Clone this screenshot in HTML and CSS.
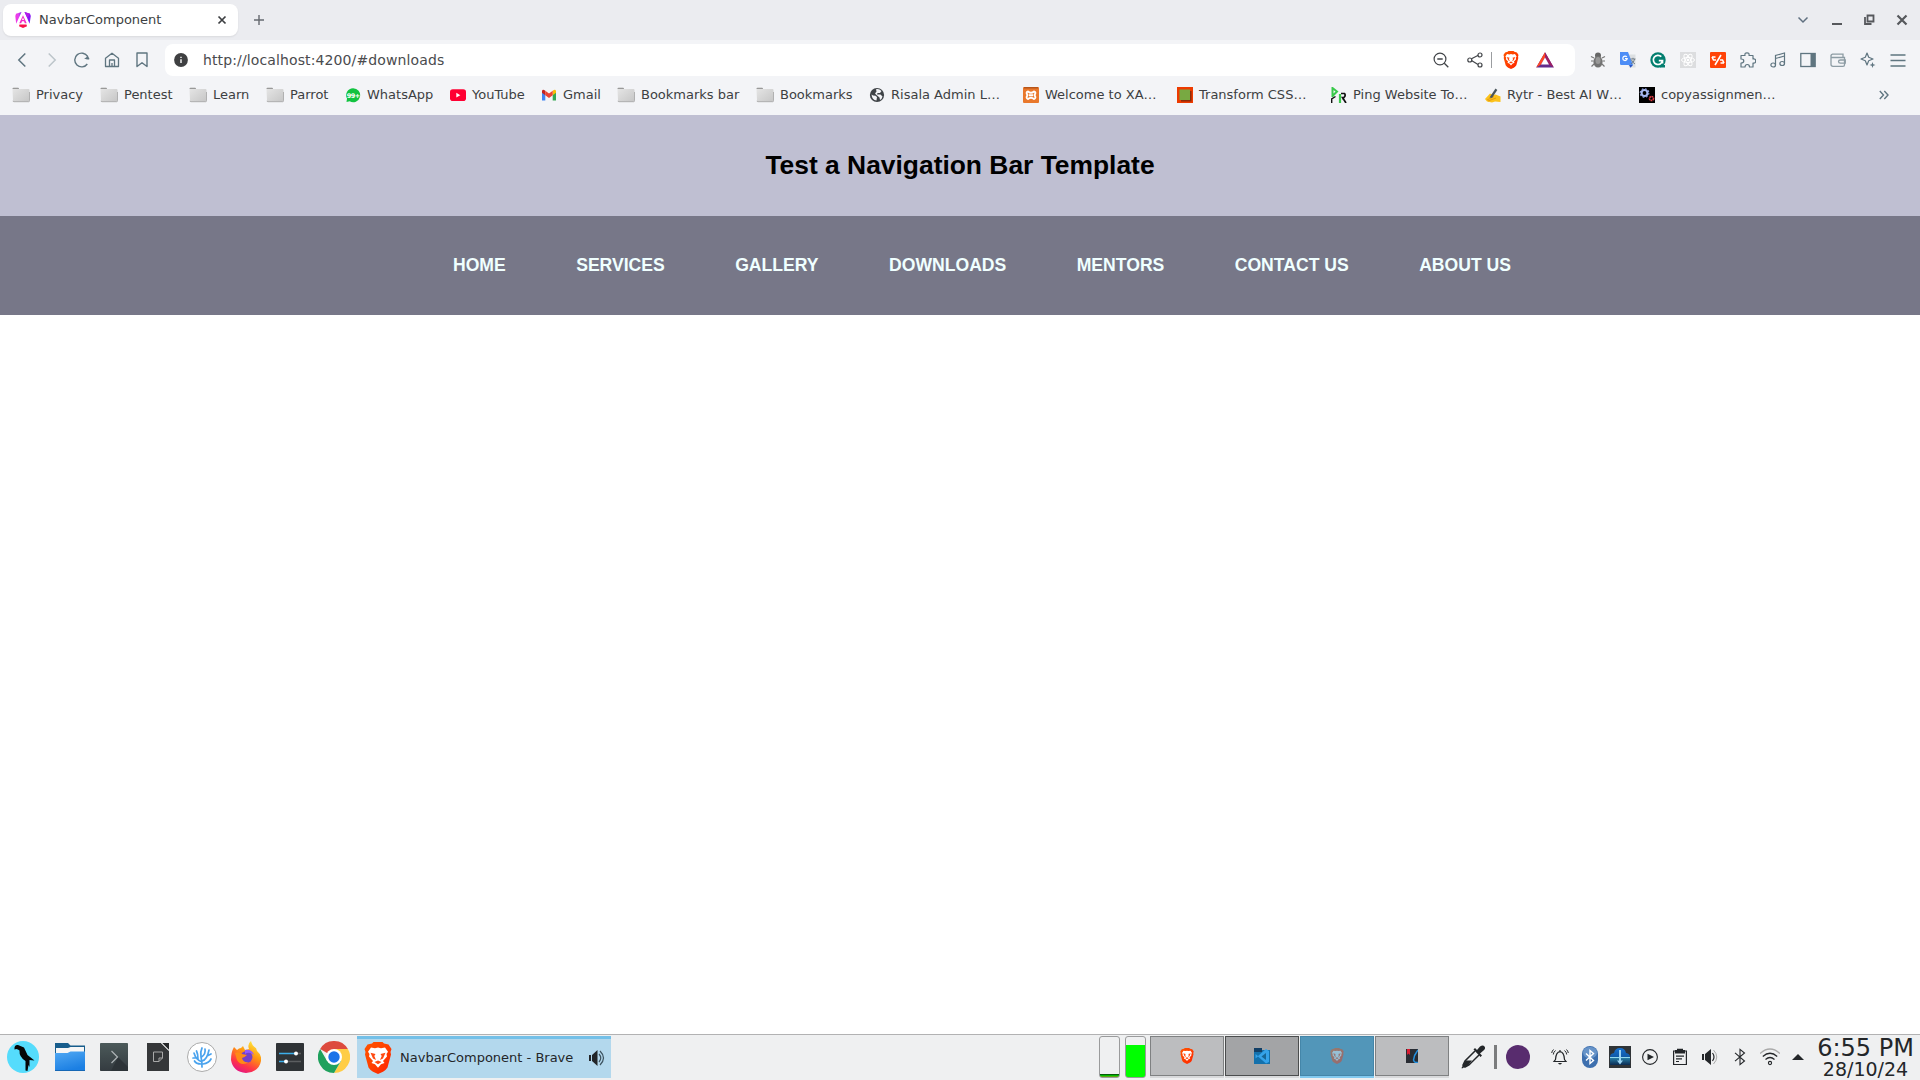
FILE: index.html
```html
<!DOCTYPE html>
<html lang="en">
<head>
<meta charset="utf-8">
<title>NavbarComponent</title>
<link rel="stylesheet" href="styles.css">
</head>
<body>
<svg class="defs" width="0" height="0" aria-hidden="true">
  <defs>
    <linearGradient id="g-folder" x1="0" y1="0" x2="1" y2="1"><stop offset="0" stop-color="#e6e6e6"/><stop offset="1" stop-color="#c6c6c6"/></linearGradient>
    <linearGradient id="g-brave" x1="0" y1="0" x2="1" y2="1"><stop offset="0" stop-color="#ff5500"/><stop offset="0.5" stop-color="#ff4000"/><stop offset="1" stop-color="#ff2000"/></linearGradient>
    <linearGradient id="g-ang" x1="0" y1="0" x2="1" y2="0"><stop offset="0" stop-color="#f637e3"/><stop offset="0.55" stop-color="#e040f0"/><stop offset="1" stop-color="#6a11f5"/></linearGradient>
    <linearGradient id="g-blue" x1="0" y1="0" x2="0.4" y2="1"><stop offset="0" stop-color="#52a9f3"/><stop offset="1" stop-color="#1b7fe3"/></linearGradient>
    <linearGradient id="g-term" x1="0" y1="0" x2="0" y2="1"><stop offset="0" stop-color="#4c5a5a"/><stop offset="1" stop-color="#343b40"/></linearGradient>
    <linearGradient id="g-fox" x1="0.8" y1="0" x2="0.3" y2="1"><stop offset="0" stop-color="#fff044"/><stop offset="0.4" stop-color="#ff980e"/><stop offset="0.75" stop-color="#ff3647"/><stop offset="1" stop-color="#e31587"/></linearGradient>
    <linearGradient id="g-dl" x1="0" y1="0" x2="0" y2="1"><stop offset="0" stop-color="#1670d0"/><stop offset="0.5" stop-color="#0f5aa8"/><stop offset="0.52" stop-color="#2b8cb4"/><stop offset="1" stop-color="#0b2b52"/></linearGradient>
    <symbol id="folder" viewBox="0 0 18 16"><path d="M0.5 2.5V1.5Q.5.8 1.3.8H6Q7 .8 7 2H16.5Q17.5 2 17.5 3V13.5Q17.5 14.5 16.5 14.5H2Q1 14.5 1 13.5Z" fill="url(#g-folder)"/><path d="M.5 2Q.5.8 1.5.8H6Q7 .8 7 2Z" fill="#999"/><path d="M1 13.8Q1 14.7 2 14.7H16.6Q17.6 14.7 17.6 13.5V5" fill="none" stroke="#a5a5a5" stroke-width=".9"/></symbol>
    <symbol id="lion" viewBox="0 0 28 32"><path d="M8 1.5L9.5 0H18.5L20 1.5L24.5 2.5L27.5 7L26.5 10L27 12.5L23.5 25.5Q22 28 19 29.7L14 32L9 29.7Q6 28 4.5 25.5L1 12.5L1.5 10L.5 7L3.5 2.5Z" fill="url(#g-brave)"/><path d="M14 5.5L17 6.2L21 5.5L24 9.8L22.5 12L23 14.5L19 19L20.5 21L17 22.3L14 25.8L11 22.3L7.500 21L9 19L5 14.500L5.500 12L4 9.800L7 5.500L11 6.200Z" fill="#fff"/><path d="M6.500 10.700L11.500 12L10.300 14L12 18L9 16.500ZM21.500 10.700L16.500 12L17.700 14L16 18L19 16.500ZM10.500 20L14 18.500L17.500 20L14 22.300Z" fill="#ff4a12"/></symbol>
  </defs>
</svg>

<div class="browser">
  <div class="tabstrip">
    <div class="tab">
      <svg width="16" height="16" viewBox="0 0 16 16"><path d="M6.500 0L1 1.700 .3 4 1.200 11.800Z" fill="url(#g-ang)"/><path d="M9.500 0L15 1.700 15.800 4 14.600 11.800Z" fill="#8514f5"/><path d="M9.500 0L15 1.700 12.500 6Z" fill="#b31ae8"/><path d="M8 3.200L4.300 11.300H6.200L7 9.300H9L9.800 11.300H11.700ZM8 5.600L9 8H7Z" fill="#f42ac9" fill-rule="evenodd"/><path d="M4.500 12.500H11.500L12 14.200 8 16 4 14.200Z" fill="#f8104c"/></svg>
      <span class="tab-title">NavbarComponent</span>
      <svg width="10" height="10" viewBox="0 0 10 10"><path d="M1.500 1.500L8.500 8.500M8.500 1.500L1.500 8.500" stroke="#3d3f42" stroke-width="1.700"/></svg>
    </div>
    <svg class="newtab" width="12" height="12" viewBox="0 0 12 12"><path d="M6 1V11M1 6H11" stroke="#666a70" stroke-width="1.400"/></svg>
    <div class="window-buttons">
      <svg width="12" height="12" viewBox="0 0 12 12"><path d="M1.500 3.500L6 8L10.500 3.500" fill="none" stroke="#607080" stroke-width="1.500"/></svg>
      <svg width="12" height="12" viewBox="0 0 12 12"><path d="M2 10H12" stroke="#56585c" stroke-width="2"/></svg>
      <svg width="12" height="12" viewBox="0 0 12 12"><path d="M4.500 1.500H10.500V7.500H4.500ZM2 3V10H8.500" fill="none" stroke="#56585c" stroke-width="1.800"/></svg>
      <svg width="12" height="12" viewBox="0 0 12 12"><path d="M1.500 1.500L10.500 10.500M10.500 1.500L1.500 10.500" stroke="#56585c" stroke-width="2.200"/></svg>
    </div>
  </div>

  <div class="toolbar">
    <div class="nav-buttons">
      <svg width="16" height="16" viewBox="0 0 16 16"><path d="M11.300 1.500L4.800 8L11.300 14.500" fill="none" stroke="#5f7580" stroke-width="1.500"/></svg>
      <svg width="16" height="16" viewBox="0 0 16 16"><path d="M4.700 1.500L11.200 8L4.700 14.500" fill="none" stroke="#bcc5ca" stroke-width="1.500"/></svg>
      <svg width="16" height="16" viewBox="0 0 16 16"><path d="M13.300 12A6.900 6.900 0 1 1 13.600 4.500" fill="none" stroke="#5f7580" stroke-width="1.400"/><path d="M10 6.200Q13 6 13.500 3L15.500 7Q14 8.500 10 6.200Z" fill="#5f7580"/></svg>
      <svg width="16" height="16" viewBox="0 0 16 16"><path d="M1.500 6.300L8 1.200L14.500 6.300V14.500H1.500ZM5.500 14.500V8H10.500V14.500M8 14.500V11" fill="none" stroke="#5f7580" stroke-width="1.300" stroke-linejoin="round"/></svg>
      <svg width="16" height="16" viewBox="0 0 16 16"><path d="M3 1H13V14.500L8 10.700L3 14.500Z" fill="none" stroke="#5f7580" stroke-width="1.400" stroke-linejoin="round"/></svg>
    </div>
    <div class="urlbar">
      <svg width="14" height="14" viewBox="0 0 14 14"><circle cx="7" cy="7" r="6.900" fill="#3f4042"/><path d="M7 6.300V10M7 3.700V5" stroke="#fff" stroke-width="1.400"/></svg>
      <span class="url">http://localhost:4200/#downloads</span>
      <svg class="zoom" width="16" height="16" viewBox="0 0 16 16"><circle cx="7" cy="7" r="5.900" fill="none" stroke="#424549" stroke-width="1.200"/><path d="M11.300 11.300L15.300 15.300M4.300 7H9.700" stroke="#424549" stroke-width="1.300"/></svg>
      <svg class="share" width="16" height="16" viewBox="0 0 16 16"><path d="M4 7L11.300 3.300M4.500 8.500L11 12.500" stroke="#424549" stroke-width="1.200"/><g fill="#fff" stroke="#424549" stroke-width="1.200"><circle cx="2.800" cy="8" r="2"/><circle cx="13" cy="3" r="2"/><circle cx="13" cy="13" r="2"/></g></svg>
      <span class="url-sep"></span>
      <svg class="shield" width="16" height="18" viewBox="0 0 28 32"><use href="#lion"/></svg>
      <svg class="bat" width="18" height="16" viewBox="0 0 18 16"><path d="M9 .2L.2 15.500H17.800Z" fill="#642c8c"/><path d="M9 .2L.2 15.500L5 12.500L9 5.500Z" fill="#ff4724"/><path d="M9 .2L17.800 15.500L13 12.500L9 5.500Z" fill="#9e1f63"/><path d="M9 5.500L5 12.500H13Z" fill="#fff"/></svg>
    </div>
    <div class="extensions">
      <svg width="16" height="16" viewBox="0 0 16 16"><path d="M4 6L1 4.500M3.500 9H1M4 12L1.500 14.500M12 6L15 4.500M12.500 9H15M12 12L14.500 14.500" stroke="#777" stroke-width="1.200"/><circle cx="8" cy="3.500" r="3" fill="#666"/><ellipse cx="8" cy="9.800" rx="4.600" ry="5.800" fill="#737373"/><ellipse cx="8" cy="8.500" rx="2.500" ry="3.500" fill="#989898"/></svg>
      <svg width="16" height="16" viewBox="0 0 16 16"><path d="M6 2.500H15.500V15.500H9Z" fill="#dcdfe2"/><path d="M9 13H13L10.500 15.800Z" fill="#2a56c6"/><path d="M0 0H8L13 13H1.300Q0 13 0 11.700Z" fill="#4d8df6"/><path d="M6.800 5A2.200 2.200 0 1 0 7.200 6.700H5" fill="none" stroke="#fff" stroke-width="1.200"/><path d="M10.500 7H15.500M13 5.800V7M14.600 7Q14 10.500 11 12M11.500 8Q12.500 10.500 15 12" fill="none" stroke="#6b7780" stroke-width=".9"/></svg>
      <svg width="16" height="16" viewBox="0 0 16 16"><circle cx="8" cy="8" r="7.700" fill="#027e6f"/><path d="M10 13H15V15.500H10Z" fill="#027e6f"/><path d="M11.300 4.700A4.600 4.600 0 1 0 12.500 8.700H8.800M12.500 8.700V11.500" fill="none" stroke="#fff" stroke-width="1.700"/></svg>
      <svg width="16" height="16" viewBox="0 0 16 16"><rect width="16" height="16" fill="#dcdddf"/><g fill="none" stroke="#fff" stroke-width="1"><ellipse cx="8" cy="8" rx="6.500" ry="2.500"/><ellipse cx="8" cy="8" rx="6.500" ry="2.500" transform="rotate(60 8 8)"/><ellipse cx="8" cy="8" rx="6.500" ry="2.500" transform="rotate(120 8 8)"/></g><circle cx="8" cy="8" r="1.300" fill="#fff"/></svg>
      <svg width="16" height="16" viewBox="0 0 16 16"><rect width="16" height="16" rx="1" fill="#ff4308"/><path d="M11 3L5 13M2 5H5.500M2 5L3.500 8H6M14 11H10.500M14 11L12.500 8H10" fill="none" stroke="#fff" stroke-width="1.600"/></svg>
      <svg width="16" height="16" viewBox="0 0 16 16"><path d="M1 3.500H5Q4.500 .8 7 .8T9 3.500H13V7Q15.700 6.500 15.700 9T13 11V15H9.500Q9.500 12.500 7.300 12.500T5 15H1V11Q3.800 11 3.800 9T1 7Z" fill="none" stroke="#5f7580" stroke-width="1.200" stroke-linejoin="round"/></svg>
      <svg width="16" height="16" viewBox="0 0 16 16"><path d="M5.500 13V3.500L14.500 1V11.500M5.500 6.500L14.500 4" fill="none" stroke="#5f7580" stroke-width="1.200"/><ellipse cx="3.200" cy="13" rx="2.300" ry="2" fill="none" stroke="#5f7580" stroke-width="1.200"/><ellipse cx="12.200" cy="11.500" rx="2.300" ry="2" fill="none" stroke="#5f7580" stroke-width="1.200"/></svg>
      <svg width="16" height="16" viewBox="0 0 16 16"><rect x=".8" y="1.500" width="14.400" height="13" fill="none" stroke="#5f7580" stroke-width="1.300"/><path d="M10.500 1.500H15V14.500H10.500Z" fill="#5f7580"/></svg>
      <svg width="16" height="16" viewBox="0 0 16 16"><path d="M1 3V12.500Q1 14.300 3 14.300H13Q14.500 14.300 14.500 13V5.500H2.500Q1 5.500 1 4T2.500 2.200H13V5.500M15.300 8H10.500Q8.500 8 8.500 9.500T10.500 11.200H15.300Z" fill="none" stroke="#8d9ca4" stroke-width="1.300"/></svg>
      <svg width="16" height="16" viewBox="0 0 16 16"><path d="M7 1L8.700 5.300 13 7 8.700 8.700 7 13 5.300 8.700 1 7 5.300 5.300Z" fill="none" stroke="#5f7580" stroke-width="1.200" stroke-linejoin="round"/><path d="M12.500 10L13.300 12.200 15.500 13 13.300 13.800 12.500 16 11.700 13.800 9.500 13 11.700 12.200Z" fill="#5f7580"/></svg>
      <svg width="16" height="16" viewBox="0 0 16 16"><path d="M.5 3H15.500M.5 8.500H15.500M.5 14H15.500" stroke="#5f7580" stroke-width="1.300"/></svg>
    </div>
  </div>

  <div class="bookmarks">
    <div class="bm"><svg width="18" height="16"><use href="#folder"/></svg><span>Privacy</span></div>
    <div class="bm"><svg width="18" height="16"><use href="#folder"/></svg><span>Pentest</span></div>
    <div class="bm"><svg width="18" height="16"><use href="#folder"/></svg><span>Learn</span></div>
    <div class="bm"><svg width="18" height="16"><use href="#folder"/></svg><span>Parrot</span></div>
    <div class="bm"><svg width="16" height="16" viewBox="0 0 16 16"><path d="M8 1.200A7 7 0 1 1 4.700 14.300L1.500 15L2 11.600A7 7 0 0 1 8 1.200Z" fill="#12c340"/><text x="8.200" y="10.800" class="badge-text">99+</text></svg><span>WhatsApp</span></div>
    <div class="bm"><svg width="16" height="16" viewBox="0 0 16 16"><rect y="2.300" width="16" height="11.700" rx="2.800" fill="#ff0033"/><path d="M6.300 5.800V10.500L10.300 8.150Z" fill="#fff"/></svg><span>YouTube</span></div>
    <div class="bm"><svg width="16" height="16" viewBox="0 0 16 16"><path d="M1 4V13.500H4.300V6.500Z" fill="#4285f4"/><path d="M11.700 6.500V13.500H15V4Z" fill="#34a853"/><path d="M11.700 3.700V8.200L15 5.700V4Q14.500 1.500 11.700 3.700Z" fill="#fbbc04"/><path d="M4.300 3.700V8.200L1 5.700V4Q1.500 1.500 4.300 3.700Z" fill="#c5221f"/><path d="M4.300 3.700L8 6.500L11.700 3.700V8.200L8 11L4.300 8.200Z" fill="#ea4335"/></svg><span>Gmail</span></div>
    <div class="bm"><svg width="18" height="16"><use href="#folder"/></svg><span>Bookmarks bar</span></div>
    <div class="bm"><svg width="18" height="16"><use href="#folder"/></svg><span>Bookmarks</span></div>
    <div class="bm"><svg width="16" height="16" viewBox="0 0 16 16"><circle cx="8" cy="8" r="7.100" fill="#3f4347"/><path d="M2.500 7.500Q4 9 6 8.500L8 10L7.500 13.500Q3 13 2.500 7.500ZM7 2.300Q10 1.500 12.500 4L11 6H8.500L8 7.500H11.500L13.500 9.500Q13 12 11 13L10.500 10.500L7.500 8L6 6.500L7.500 4.500Z" fill="#f3f4f7"/></svg><span>Risala Admin L…</span></div>
    <div class="bm"><svg width="16" height="16" viewBox="0 0 16 16"><rect width="16" height="16" rx="1" fill="#e9782c"/><path d="M1 0H15V1.500H1Z" fill="#b75519"/><path d="M5 4.500Q8 7 11 4.500Q13.500 5 11.500 8Q13.500 11.500 11 12Q8 9.500 5 12Q2.500 11.500 4.500 8Q2.500 5 5 4.500ZM6 8.200H10" fill="none" stroke="#fff" stroke-width="1.900"/></svg><span>Welcome to XA…</span></div>
    <div class="bm"><svg width="16" height="16" viewBox="0 0 16 16"><rect width="16" height="16" fill="#ed3b00"/><path d="M4 4H14.500V14.500H4Z" fill="#8d2b08"/><rect x="2.500" y="2.500" width="10.500" height="10.500" fill="#78a942"/></svg><span>Transform CSS…</span></div>
    <div class="bm"><svg width="16" height="16" viewBox="0 0 16 16"><path d="M1.500 10V1L6 4.500L1.500 9" fill="none" stroke="#3ac94c" stroke-width="2"/><path d="M.7 16V12L4.500 9.500" fill="none" stroke="#111" stroke-width="1.400"/><path d="M9 16V7" stroke="#3ac94c" stroke-width="2.200"/><path d="M10 6.500H13.500Q15 8.500 13 10.500H11.500L15 16M12 10V12.500" fill="none" stroke="#111" stroke-width="1.700"/></svg><span>Ping Website To…</span></div>
    <div class="bm"><svg width="16" height="16" viewBox="0 0 16 16"><path d="M0 12L5 6.500L8 8L10.500 7.500L15.500 9.500V15L10 14.500L7 15.500L2 14.500Z" fill="#fcc21b"/><path d="M2 13L9 9.500M3 14L11 11" stroke="#e39a12" stroke-width="1"/><path d="M4.500 10.500L10.500 1.500L12.300 3L7 11Z" fill="#4a555c"/></svg><span>Rytr - Best AI W…</span></div>
    <div class="bm"><svg width="16" height="16" viewBox="0 0 16 16"><rect width="16" height="16" fill="#000"/><circle cx="5.500" cy="6" r="2.900" fill="none" stroke="#a9b9f0" stroke-width="2"/><circle cx="5.500" cy="6" r="4.300" fill="none" stroke="#91a3e5" stroke-width="1.200" stroke-dasharray="1.700 1.675"/><circle cx="12.500" cy="11.500" r="2" fill="none" stroke="#e33d45" stroke-width="1.700" stroke-dasharray="1.600 .5"/></svg><span>copyassignmen…</span></div>
    <div class="bm more"><svg width="10" height="16" viewBox="0 0 10 16"><path d="M.8 4L4.500 8L.8 12M5.300 4L9 8L5.300 12" fill="none" stroke="#5f7580" stroke-width="1.400"/></svg></div>
  </div>
</div>

<main class="page">
  <header class="hero"><h1>Test a Navigation Bar Template</h1></header>
  <nav class="site-nav">
    <ul>
      <li><a>HOME</a></li><li><a>SERVICES</a></li><li><a>GALLERY</a></li><li><a>DOWNLOADS</a></li><li><a>MENTORS</a></li><li><a>CONTACT US</a></li><li><a>ABOUT US</a></li>
    </ul>
  </nav>
</main>

<footer class="taskbar">
  <div class="launchers">
    <svg width="32" height="32" viewBox="0 0 32 32"><circle cx="16" cy="16" r="16" fill="#55dcfc"/><path d="M7.500 8.500Q7 3.500 11 4L17 6.500L20.500 14L27.500 19.500L22.500 19V26L21.500 24L20.500 30L18.500 29.500V20Q12 16 12.500 9.500Q10 7 7.500 8.500Z" fill="#050505"/></svg>
    <svg width="30" height="30" viewBox="0 0 30 30"><path d="M0 1H13L15.500 3.500H30V14H0Z" fill="#175d8c"/><path d="M1 6H13L15.500 5H29V13H1Z" fill="#f6f6f6"/><path d="M0 11H12.500L15.500 9.500H30V29H0Z" fill="url(#g-blue)"/><path d="M0 28.500H30" stroke="#1667b5"/></svg>
    <svg width="28" height="28" viewBox="0 0 28 28"><rect width="28" height="28" rx=".8" fill="url(#g-term)"/><path d="M18 14L28 24V28H11Z" fill="#2d3438"/><path d="M11.500 8L17.500 14L11.500 20" fill="none" stroke="#aeb4b6" stroke-width="1.200"/></svg>
    <svg width="22" height="28" viewBox="0 0 22 28"><path d="M0 0H14L22 8V28H0Z" fill="#353739"/><path d="M15 0H22V7Z" fill="#252729"/><path d="M14.500 0L22 7.500" stroke="#eee"/><path d="M6.500 9H15.500V15L12 18.500H6.500ZM12 18.500V15H15.500" fill="none" stroke="#a8a8a8"/></svg>
    <svg width="30" height="30" viewBox="0 0 30 30"><circle cx="15" cy="15" r="14.500" fill="#fff" stroke="#aaa"/><path d="M15 25Q15 19 14 15Q13 10 15 6M15 20Q9 18 7 11M15 19Q20 18 22 8M10 16L6 16M11 17Q11 12 9.500 9M20 14L24 12M14.500 15Q19 12 18 7M16 22Q22 21 24 17M14 22Q9 22 7.500 19" fill="none" stroke="#4aa3ee" stroke-width="1.700" stroke-linecap="round"/></svg>
    <svg width="30" height="32" viewBox="0 0 30 32"><path d="M3 6L6 9Q8 7 10 7L12 5L14 9L18 8Q16 3 20 0Q21 5 25 7L26 10Q31 14 30 20Q28 31 15 32Q2 31 0 19Q0 11 3 6Z" fill="url(#g-fox)"/><circle cx="15.500" cy="16" r="6" fill="#7540c8"/><path d="M4 12Q8 10 11 13L16 14Q13 17 11 17Q12 22 18 21Q10 26 6 19Z" fill="#ff8a16"/><path d="M14 9Q21 8 23 14Q18 10 14 13Z" fill="#9059ff"/></svg>
    <svg width="28" height="28" viewBox="0 0 28 28"><rect width="28" height="28" rx=".8" fill="#2f3336"/><path d="M3 10.500H20M3 18.500H10" stroke="#3daee9" stroke-width="1.600"/><path d="M20 10.500H25M10 18.500H25" stroke="#5b5e60" stroke-width="1.600"/><circle cx="20" cy="10.500" r="2" fill="#fff"/><circle cx="10" cy="18.500" r="2" fill="#fff"/></svg>
    <svg width="32" height="32" viewBox="0 0 32 32"><path d="M16 16L2.140 8A16 16 0 0 1 29.860 8Z" fill="#dd4b3e"/><path d="M16 8H29.860A16 16 0 0 1 16 32L23 20Z" fill="#ffcd46"/><path d="M9.070 20L2.140 8A16 16 0 0 0 16 32L22.930 20Z" fill="#1fa15d"/><circle cx="16" cy="16" r="8" fill="#fff"/><circle cx="16" cy="16" r="5.700" fill="#1a73e8"/></svg>
  </div>
  <div class="task">
    <svg width="28" height="32"><use href="#lion"/></svg>
    <span>NavbarComponent - Brave</span>
    <svg width="18" height="18" viewBox="0 0 18 18"><path d="M1 6H3V12H1ZM4 6L9.500 1V17L4 12Z" fill="#232629"/><path d="M11 5Q14.500 9 11 13M12 2Q19 9 12 16" fill="none" stroke="#3d5360" stroke-width="1.200"/></svg>
  </div>
  <div class="gauges"><div class="gauge low"></div><div class="gauge high"></div></div>
  <div class="pager">
    <div class="desk"><svg width="14" height="16" viewBox="0 0 28 32"><use href="#lion"/></svg></div>
    <div class="desk dark"><svg width="16" height="16" viewBox="0 0 16 16"><path d="M0 0H8V2H16V16H0Z" fill="#1471ac"/><path d="M0 0H8V4H0Z" fill="#123f66"/><path d="M12 1L15 3V14L12 15.500L4 8.500L1.500 10.500V6L4 8Z" fill="#35a2e9"/><path d="M12 5V12L7.500 8.500Z" fill="#176697"/></svg></div>
    <div class="desk active"><svg width="14" height="16" viewBox="0 0 28 32"><use href="#lion"/></svg></div>
    <div class="desk"><svg width="12" height="14" viewBox="0 0 12 14"><rect width="12" height="14" fill="#282c33"/><path d="M1 0H4V6L2.500 4.500L1 6Z" fill="#d91c32"/><path d="M12 1Q8 6 7.500 11Q8 14 12 13.500" fill="none" stroke="#2391df" stroke-width="1.500"/></svg></div>
  </div>
  <div class="picker">
    <svg width="24" height="24" viewBox="0 0 24 24"><path d="M14 6L4 16L2 20L4 22L8 20L18 10" fill="none" stroke="#232629" stroke-width="1.500"/><path d="M4.500 15.500H11L7.500 20L1 23.500L.5 23Z" fill="#232629"/><path d="M12.500 4.500L14 3L16 5L19 1.500Q22-.5 23.500 1.500T22.500 5.500L19 8.500L21 10.500L19.500 12Z" fill="#232629"/></svg>
    <span class="picker-sep"></span><span class="picker-color"></span>
  </div>
  <div class="tray">
    <svg width="18" height="18" viewBox="0 0 18 18"><path d="M3 13.500H15L13.500 11.500Q13 4 9 3.700Q5 4 4.500 11.500ZM9 3.700V2" fill="none" stroke="#232629" stroke-width="1.200"/><path d="M7 15H11Q9 18 7 15Z" fill="#232629"/><path d="M4.500 2.500Q2.500 4 2.300 6.500M2.500 1.500Q1 3 .7 5M13.500 2.500Q15.500 4 15.700 6.500M15.500 1.500Q17 3 17.300 5" fill="none" stroke="#232629"/></svg>
    <svg width="16" height="22" viewBox="0 0 16 22"><rect width="16" height="22" rx="8" fill="#3d6fae"/><rect x="1" y="1" width="14" height="11" rx="6" fill="#6794c9"/><path d="M4 7.500L11.500 14.500L8 17.500V4.500L11.500 7.500L4 14.500" fill="none" stroke="#fff" stroke-width="1.400"/></svg>
    <svg width="22" height="22" viewBox="0 0 22 22"><rect width="22" height="22" fill="#303437"/><path d="M1 11Q1 7.500 5 7Q6 2 11 2Q16 2 17 7Q21 7.500 21 11V19H1Z" fill="url(#g-dl)"/><path d="M1 11.500H21" stroke="#92d9ee" stroke-width="1"/><path d="M10 4H12V14.500H14L11 18.500L8 14.500H10Z" fill="#9bd5f4"/></svg>
    <svg width="16" height="16" viewBox="0 0 16 16"><circle cx="8" cy="8" r="7.400" fill="none" stroke="#232629" stroke-width="1.100"/><path d="M5.500 4.700L12 8L5.500 11.300Z" fill="#232629"/></svg>
    <svg width="16" height="18" viewBox="0 0 16 18"><path d="M1.600 3H14.400V16.500H1.600Z" fill="none" stroke="#232629" stroke-width="1.200"/><path d="M3 5.500V2H5V.8H11V2H13V5.500ZM4 7.500H12V8.700H4ZM4 10.200H10V11.400H4ZM4 12.900H7V14H4Z" fill="#232629"/></svg>
    <svg width="18" height="18" viewBox="0 0 18 18"><path d="M1 6H3V12H1ZM4 6L10 1V17L4 12Z" fill="#232629"/><path d="M11.500 5Q14.500 9 11.500 13" fill="none" stroke="#232629" stroke-width="1.200"/><path d="M12.500 2Q19 9 12.500 16" fill="none" stroke="#aaa" stroke-width="1"/></svg>
    <svg width="12" height="18" viewBox="0 0 12 18"><path d="M1 4.800L10.500 13L6 16.700V1.300L10.500 5L1 13.200" fill="none" stroke="#232629" stroke-width="1.100"/></svg>
    <svg width="20" height="18" viewBox="0 0 20 18"><path d="M0 5.500Q10-3.500 20 5.500" fill="none" stroke="#aaa" stroke-width="1.200"/><path d="M2.800 8.500Q10 2 17.200 8.500M5.500 11.500Q10 7.500 14.500 11.500" fill="none" stroke="#232629" stroke-width="1.200"/><circle cx="10" cy="15" r="1.600" fill="none" stroke="#232629" stroke-width="1.100"/></svg>
    <svg width="12" height="6" viewBox="0 0 12 6"><path d="M0 6L6 0L12 6Z" fill="#232629"/></svg>
  </div>
  <div class="clock"><span class="time">6:55 PM</span><span class="date">28/10/24</span></div>
</footer>
</body>
</html>
```
FILE: styles.css
```css
* { box-sizing: border-box; }
body {
  margin: 0;
  width: 1920px;
  height: 1080px;
  overflow: hidden;
  display: flex;
  flex-direction: column;
  background: #fff;
  color: #3d3f42;
  font: 13px/16px "DejaVu Sans", sans-serif;
}
svg { display: block; flex: none; }

.browser { height: 115px; flex: none; background: #f3f4f7; }
.tabstrip { height: 40px; display: flex; align-items: center; background: #ebecf0; padding-left: 3px; }
.tab {
  width: 235px;
  height: 32px;
  display: flex;
  align-items: center;
  padding: 0 11px 0 12px;
  background: #fff;
  border-radius: 8px;
  box-shadow: 0 1px 2px rgba(0, 0, 0, .08);
}
.tab-title { flex: 1; margin-left: 8px; font-size: 13px; }
.newtab { margin-left: 15px; }
.window-buttons { margin-left: auto; display: flex; gap: 21px; padding-right: 12px; }

.toolbar { height: 40px; display: flex; align-items: center; }
.nav-buttons { display: flex; gap: 14px; margin-left: 14px; width: 151px; }
.urlbar {
  width: 1410px;
  height: 32px;
  display: flex;
  align-items: center;
  padding: 0 21px 0 9px;
  background: #fff;
  border-radius: 8px;
}
.url { flex: 1; margin-left: 15px; font-size: 14px; letter-spacing: .12px; color: #4a4b4e; }
.share { margin-left: 18px; }
.url-sep { width: 1px; height: 16px; margin: 0 11px 0 8px; background: #9b9da0; }
.bat { margin-left: 17px; }
.extensions { display: flex; gap: 14px; margin-left: 15px; }

.bookmarks {
  height: 35px;
  padding: 1px 0 6px 12px;
  display: grid;
  grid-template-columns: 88px 89px 77px 79px 105px 91px 76px 139px 113px 154px 154px 154px 154px 154px 240px auto;
  align-items: center;
}
.bm { display: flex; align-items: center; gap: 6px; white-space: nowrap; }
.badge-text { font: bold 6.500px "DejaVu Sans", sans-serif; letter-spacing: -.5px; fill: #fff; text-anchor: middle; }

.page { flex: 1; font-family: "Liberation Sans", Arial, sans-serif; }
.hero { height: 101px; display: flex; align-items: center; justify-content: center; padding-bottom: 2px; background: #bfbfd2; }
.hero h1 { margin: 0; font-size: 26.400px; line-height: 30px; color: #000; }
.site-nav { height: 99px; background: #777788; }
.site-nav ul {
  height: 100%;
  margin: 0;
  padding: 0 0 2px 44px;
  display: flex;
  align-items: center;
  justify-content: center;
  gap: 70.400px;
  list-style: none;
}
.site-nav a { font-size: 17.600px; line-height: 20px; font-weight: bold; color: azure; }

.taskbar { height: 46px; flex: none; display: flex; align-items: flex-start; padding-top: 1px; border-top: 1px solid #b2b2b3; background: #eff0f1; color: #232629; }
.taskbar > * { flex: none; }
.launchers { width: 357px; height: 42px; display: grid; grid-template-columns: 48px repeat(7, 44px); align-items: center; justify-items: center; }
.launchers svg:first-child { margin-right: 2px; }
.task {
  width: 254px;
  height: 42px;
  display: flex;
  align-items: center;
  padding: 0 5px 2px 7px;
  border-top: 3px solid #74c0e8;
  background: #b3d8ed;
}
.task span { flex: 1; margin-left: 8px; }
.gauges { display: flex; gap: 5px; margin-left: 488px; }
.gauge { width: 21px; height: 42px; border: 1px solid #9a9b9c; border-radius: 3px; }
.low { background: linear-gradient(#eff0f1 37px, #082f08 37px, #00e400 39px, #b76e1c 40px); }
.high { background: linear-gradient(#eff0f1 8px, #00ff00 8px); }
.pager { display: flex; gap: 1px; margin-left: 4px; }
.desk { width: 74px; height: 40px; display: flex; align-items: center; justify-content: center; border: 1px solid #7f8182; background: #bcbdbf; box-shadow: 0 2px #d8d9db; }
.dark { background: #a3a4a6; border-color: #4b4d4e; }
.active { background: #5296b9; border-color: #4486a9; box-shadow: 0 2px #82c9ef; }
.active svg { opacity: .4; }
.picker { height: 42px; display: flex; align-items: center; margin-left: 12px; }
.picker-sep { width: 3px; height: 24px; margin: 0 9px; background: #7b7c7d; }
.picker-color { width: 24px; height: 24px; border-radius: 50%; background: #582c6e; }
.tray { height: 42px; display: grid; grid-template-columns: repeat(8, 30px) 26px; align-items: center; justify-items: center; margin-left: 15px; }
.clock { display: flex; flex-direction: column; align-items: center; width: 109px; white-space: nowrap; }
.time { font-size: 24px; line-height: 24px; }
.date { font-size: 19px; line-height: 18px; }
```
